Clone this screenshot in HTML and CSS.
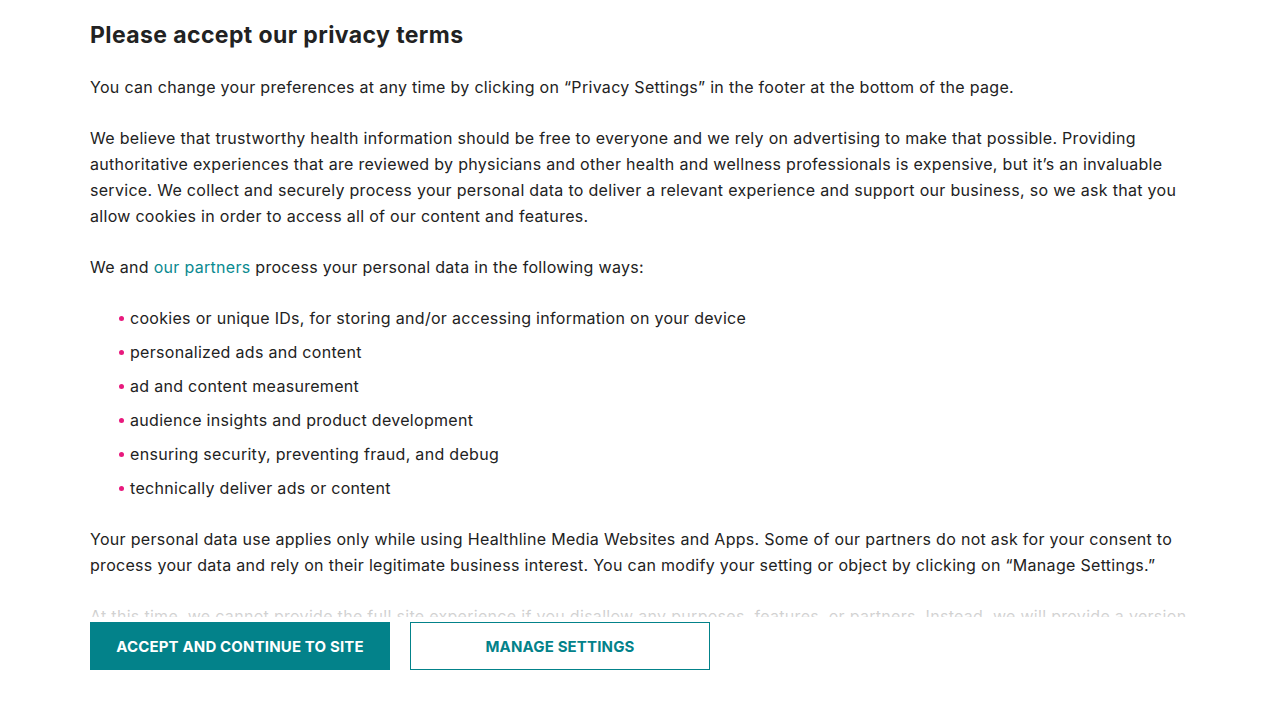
FILE: index.html
```html
<!DOCTYPE html>
<html lang="en">
<head>
<meta charset="utf-8">
<title>Please accept our privacy terms</title>
<link rel="stylesheet" href="styles.css">
</head>
<body>
<div class="consent">
  <div class="content">
    <h1 class="title">Please accept our privacy terms</h1>
    <p class="text">You can change your preferences at any time by clicking on “Privacy Settings” in the footer at the bottom of the page.</p>
    <p class="text">We believe that trustworthy health information should be free to everyone and we rely on advertising to make that possible. Providing authoritative experiences that are reviewed by physicians and other health and wellness professionals is expensive, but it’s an invaluable service. We collect and securely process your personal data to deliver a relevant experience and support our business, so we ask that you allow cookies in order to access all of our content and features.</p>
    <p class="text">We and <a class="link" href="#">our partners</a> process your personal data in the following ways:</p>
    <ul class="purposes">
      <li class="purpose">cookies or unique IDs, for storing and/or accessing information on your device</li>
      <li class="purpose">personalized ads and content</li>
      <li class="purpose">ad and content measurement</li>
      <li class="purpose">audience insights and product development</li>
      <li class="purpose">ensuring security, preventing fraud, and debug</li>
      <li class="purpose">technically deliver ads or content</li>
    </ul>
    <p class="text">Your personal data use applies only while using Healthline Media Websites and Apps. Some of our partners do not ask for your consent to process your data and rely on their legitimate business interest. You can modify your setting or object by clicking on “Manage Settings.”</p>
    <p class="text">At this time, we cannot provide the full site experience if you disallow any purposes, features, or partners. Instead, we will provide a version of the site with limited content and features.</p>
  </div>
  <div class="actions">
    <button class="btn btn-primary" type="button">ACCEPT AND CONTINUE TO SITE</button>
    <button class="btn btn-secondary" type="button">MANAGE SETTINGS</button>
  </div>
</div>
</body>
</html>
```
FILE: styles.css
```css
html, body {
  margin: 0;
  padding: 0;
  background: #ffffff;
}

body {
  font-family: "Inter", "Open Sans", sans-serif;
  color: #222222;
}

.consent {
  height: 720px;
  display: flex;
  flex-direction: column;
  box-sizing: border-box;
}

.content {
  flex: 1;
  min-height: 0;
  overflow: hidden;
  position: relative;
  padding: 19px 90px 0;
  display: flex;
  flex-direction: column;
}

.content::after {
  content: "";
  position: absolute;
  left: 0;
  right: 0;
  bottom: 0;
  height: 30px;
  background: linear-gradient(to bottom, rgba(255,255,255,0) 0%, rgba(255,255,255,0.72) 55%, rgba(255,255,255,0.82) 100%);
}

.title {
  margin: 0 0 23px;
  font-size: 23px;
  line-height: 32px;
  font-weight: 700;
  letter-spacing: 0.4px;
  color: #222222;
}

.text {
  margin: 0 0 25px;
  font-size: 16px;
  line-height: 26px;
  letter-spacing: 0.3px;
  flex-shrink: 0;
}

.link {
  color: #0a8a90;
  text-decoration: none;
}

.purposes {
  list-style: none;
  margin: -4px 0 21px;
  padding: 0 0 0 29px;
  flex-shrink: 0;
}

.purpose {
  padding: 4px 0;
  font-size: 16px;
  line-height: 26px;
  letter-spacing: 0.3px;
}

.purpose::before {
  content: "";
  display: inline-block;
  width: 5px;
  height: 5px;
  border-radius: 50%;
  background: #e8197d;
  margin-right: 6px;
  vertical-align: 3px;
}

.actions {
  display: flex;
  gap: 20px;
  padding: 5px 90px 50px;
}

.btn {
  width: 300px;
  height: 48px;
  box-sizing: border-box;
  font-family: "Inter", "Open Sans", sans-serif;
  font-size: 15px;
  font-weight: 700;
  letter-spacing: 0.15px;
  cursor: pointer;
  border-radius: 0;
}

.btn-primary {
  background: #03828a;
  color: #ffffff;
  border: 1px solid #03828a;
}

.btn-secondary {
  background: #ffffff;
  color: #03828a;
  border: 1px solid #03828a;
}
```
